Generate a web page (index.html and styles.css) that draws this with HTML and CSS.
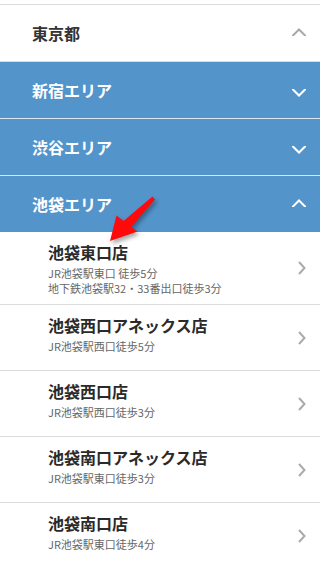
FILE: index.html
```html
<!DOCTYPE html>
<html lang="ja">
<head>
<meta charset="utf-8">
<title>店舗一覧</title>
<link rel="stylesheet" href="styles.css">
</head>
<body>
<div class="page">
  <ul class="areas">
    <li class="area area-pref">
      <div class="head">
        <span class="head-label">東京都</span>
        <svg class="chev chev-up" width="14" height="8" viewBox="0 0 14 8"><polyline points="1,7.5 7,1.5 13,7.5"/></svg>
      </div>
    </li>
    <li class="area area-blue">
      <div class="head">
        <span class="head-label">新宿エリア</span>
        <svg class="chev chev-down" width="14" height="8" viewBox="0 0 14 8"><polyline points="1,0.5 7,6.5 13,0.5"/></svg>
      </div>
    </li>
    <li class="area area-blue">
      <div class="head">
        <span class="head-label">渋谷エリア</span>
        <svg class="chev chev-down" width="14" height="8" viewBox="0 0 14 8"><polyline points="1,0.5 7,6.5 13,0.5"/></svg>
      </div>
    </li>
    <li class="area area-blue area-open">
      <div class="head">
        <span class="head-label">池袋エリア</span>
        <svg class="chev chev-up" width="14" height="8" viewBox="0 0 14 8"><polyline points="1,7.5 7,1.5 13,7.5"/></svg>
      </div>
      <ul class="shops">
        <li class="shop">
          <div class="shop-text">
            <p class="shop-name">池袋東口店</p>
            <p class="shop-access">JR池袋駅東口 徒歩5分</p>
            <p class="shop-access shop-access-more">地下鉄池袋駅32・33番出口徒歩3分</p>
          </div>
          <svg class="shop-chev" width="8" height="14" viewBox="0 0 8 14"><polyline points="1,1 6.5,7 1,13"/></svg>
        </li>
        <li class="shop">
          <div class="shop-text">
            <p class="shop-name">池袋西口アネックス店</p>
            <p class="shop-access">JR池袋駅西口徒歩5分</p>
          </div>
          <svg class="shop-chev" width="8" height="14" viewBox="0 0 8 14"><polyline points="1,1 6.5,7 1,13"/></svg>
        </li>
        <li class="shop">
          <div class="shop-text">
            <p class="shop-name">池袋西口店</p>
            <p class="shop-access">JR池袋駅西口徒歩3分</p>
          </div>
          <svg class="shop-chev" width="8" height="14" viewBox="0 0 8 14"><polyline points="1,1 6.5,7 1,13"/></svg>
        </li>
        <li class="shop">
          <div class="shop-text">
            <p class="shop-name">池袋南口アネックス店</p>
            <p class="shop-access">JR池袋駅東口徒歩3分</p>
          </div>
          <svg class="shop-chev" width="8" height="14" viewBox="0 0 8 14"><polyline points="1,1 6.5,7 1,13"/></svg>
        </li>
        <li class="shop">
          <div class="shop-text">
            <p class="shop-name">池袋南口店</p>
            <p class="shop-access">JR池袋駅東口徒歩4分</p>
          </div>
          <svg class="shop-chev" width="8" height="14" viewBox="0 0 8 14"><polyline points="1,1 6.5,7 1,13"/></svg>
        </li>
      </ul>
    </li>
  </ul>
  <svg class="annot-arrow" width="320" height="567" viewBox="0 0 320 567">
    <polygon points="110,241 116.5,215.5 123.5,221 152.5,196.5 155,199.5 131,227 137.5,231.5"/>
  </svg>
</div>
</body>
</html>
```

FILE: styles.css
```css
html, body {
  margin: 0;
  padding: 0;
  background: #fff;
}

.page {
  position: relative;
  width: 320px;
  padding-top: 4px;
  font-family: "Noto Sans CJK JP", "Noto Sans", "Liberation Sans", sans-serif;
  color: #333;
}

ul {
  list-style: none;
  margin: 0;
  padding: 0;
}

p {
  margin: 0;
}

.areas {
  border-top: 1px solid #dcdcdc;
}

.head {
  display: flex;
  align-items: center;
  justify-content: space-between;
  height: 56px;
  padding: 0 14px 0 32px;
  box-sizing: border-box;
}

.head-label {
  font-size: 16px;
  font-weight: bold;
  line-height: 20px;
}

.area-pref .head {
  border-bottom: 1px solid #dcdcdc;
  height: 57px;
}

.area-pref .head-label {
  color: #333;
}

.area-blue .head {
  background: #5394cb;
  color: #fff;
  border-bottom: 1px solid #dce6ef;
  height: 57px;
}

.area-open .head {
  border-bottom: none;
  height: 56px;
}

.chev polyline {
  fill: none;
  stroke-width: 2;
  stroke-linecap: square;
}

.area-pref .chev polyline {
  stroke: #a8a8a8;
}

.area-blue .chev polyline {
  stroke: #fff;
}

.chev-down {
  margin-top: 6px;
}

.chev-up {
  margin-bottom: 3px;
}

.shop {
  display: flex;
  align-items: center;
  justify-content: space-between;
  min-height: 66px;
  box-sizing: border-box;
  padding: 0 14px 0 48px;
  border-bottom: 1px solid #dcdcdc;
}

.shop-text {
  align-self: flex-start;
  padding: 8px 0 9px;
}

.shop-name {
  font-size: 16px;
  font-weight: bold;
  line-height: 24px;
  color: #2a2a2a;
}

.shop-access {
  margin-top: 2px;
  font-size: 11px;
  line-height: 14px;
  color: #666;
}

.shop-access-more {
  margin-top: 1px;
}

.shop-chev polyline {
  fill: none;
  stroke: #aaaaaa;
  stroke-width: 2;
}

.annot-arrow {
  position: absolute;
  left: 0;
  top: 0;
  pointer-events: none;
  filter: drop-shadow(2px 3px 2px rgba(0, 0, 0, 0.35));
}

.annot-arrow polygon {
  fill: #ff0a0a;
}
```
